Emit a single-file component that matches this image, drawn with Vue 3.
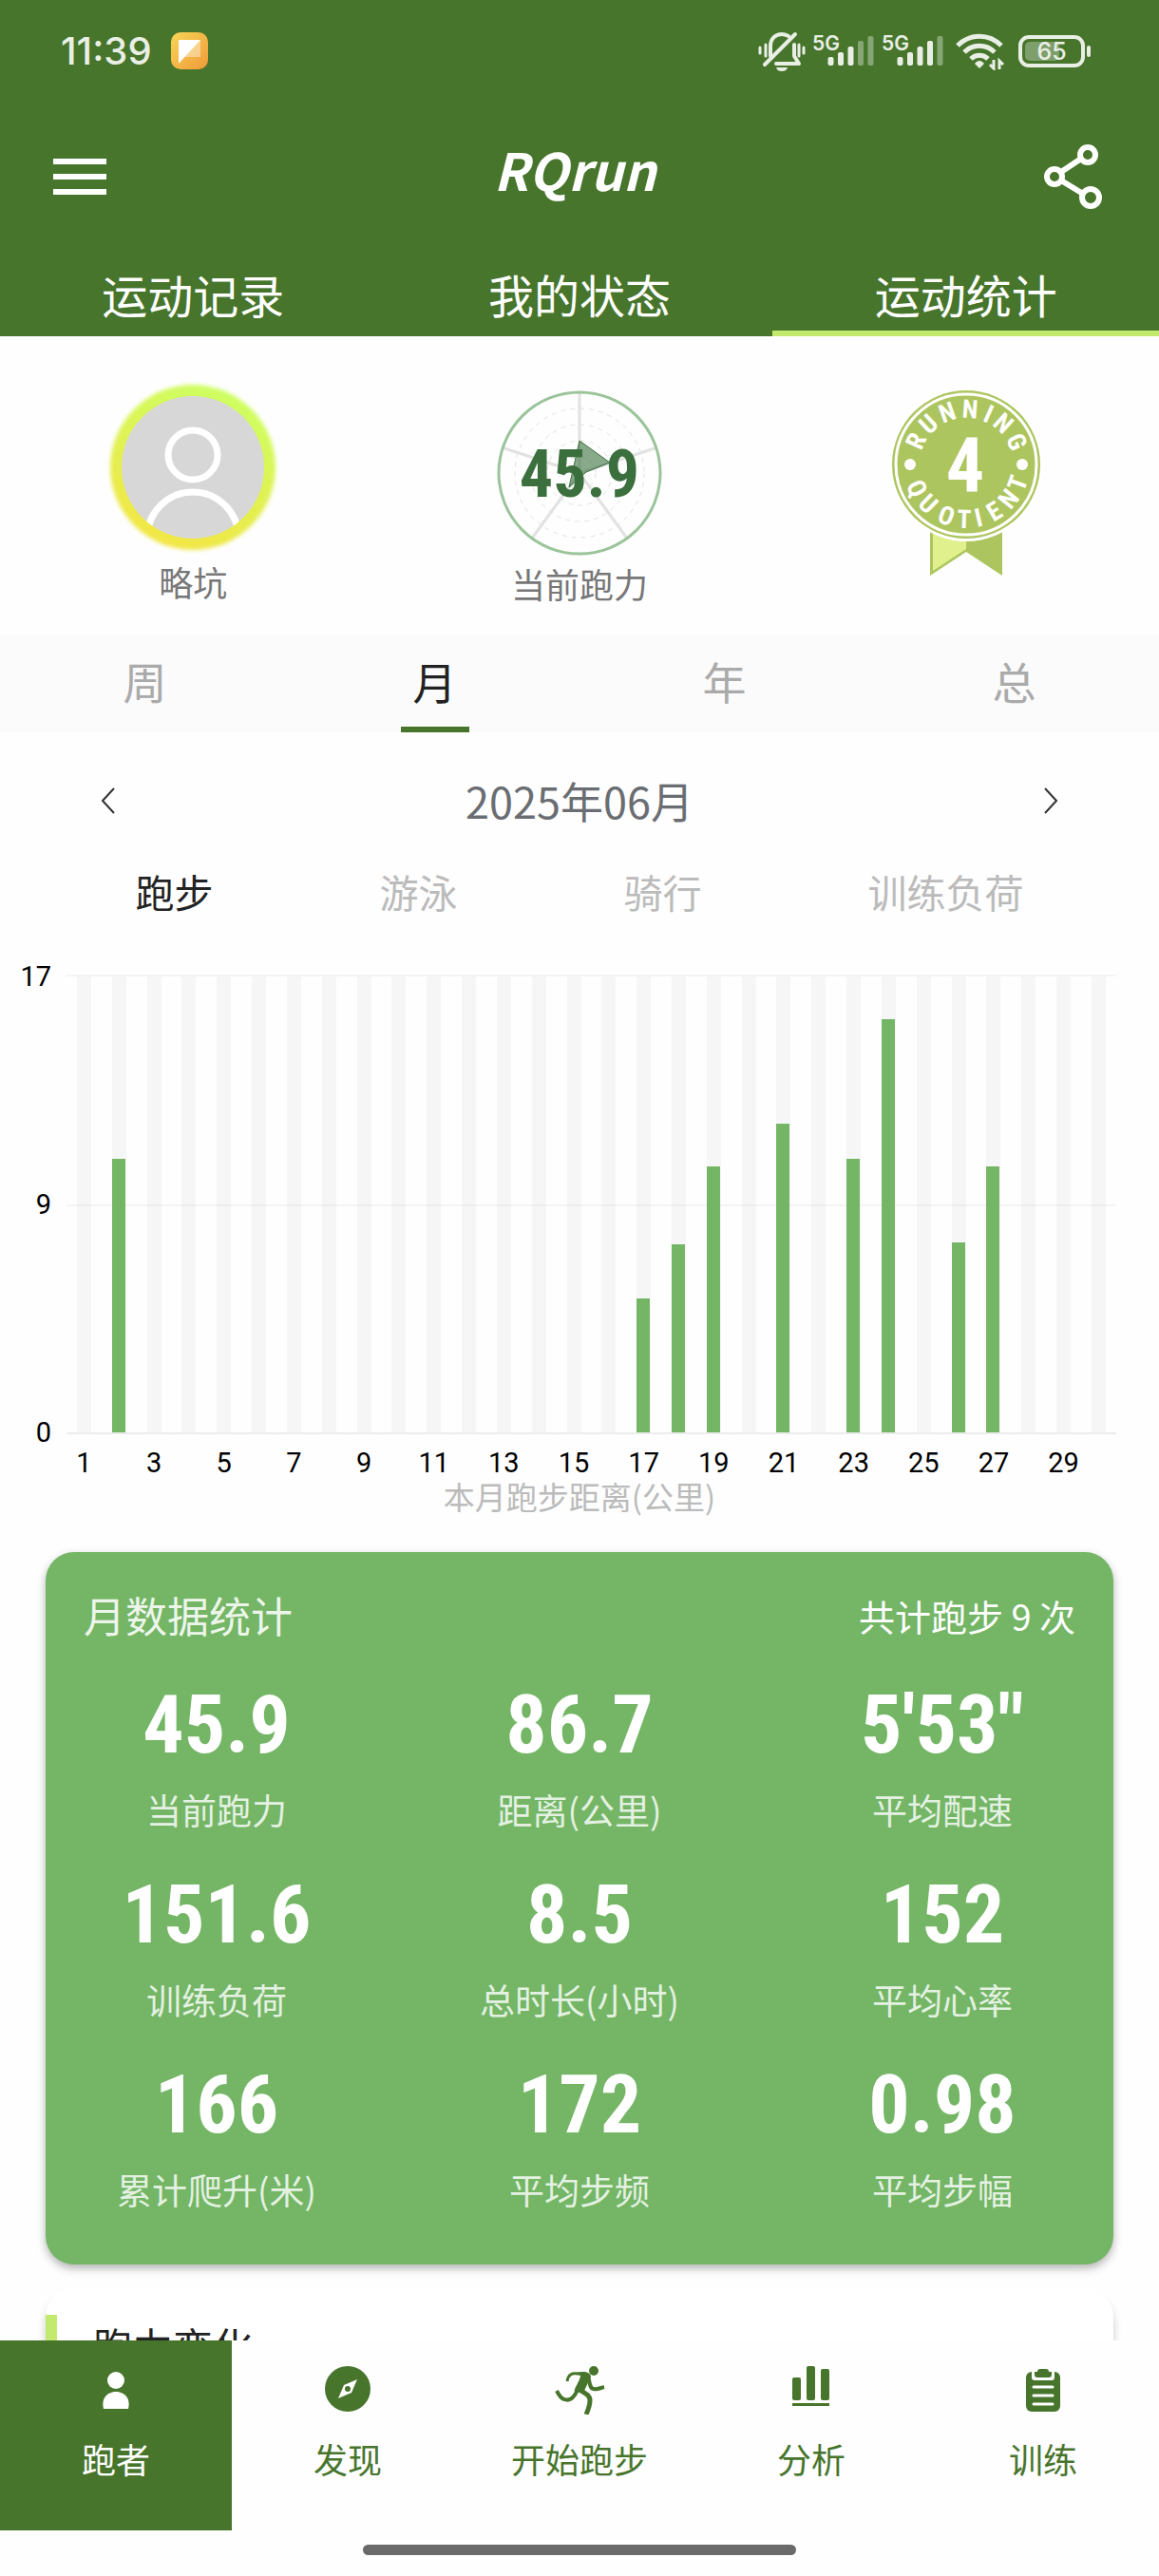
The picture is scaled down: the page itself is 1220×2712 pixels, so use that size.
<template>
  <div class="app">
    <header class="header">
      <div class="status-bar">
        <div class="status-left">
          <span class="clock">11:39</span>
          <svg width="40" height="40" viewBox="0 0 40 40">
            <defs>
              <linearGradient id="note" x1="0" y1="0" x2="1" y2="1">
                <stop offset="0" stop-color="#f8d656" />
                <stop offset="1" stop-color="#f09a3a" />
              </linearGradient>
            </defs>
            <rect width="39" height="39" rx="10" fill="url(#note)" />
            <rect x="8" y="8" width="23" height="18" fill="#fff" opacity=".4" />
            <path d="M8 8h23L8 33z" fill="#fff" />
          </svg>
        </div>
        <div class="status-right">
          <svg width="50" height="44" viewBox="0 0 50 44" fill="none" stroke="#e9efe5" stroke-width="4" stroke-linecap="round" stroke-linejoin="round">
            <path d="M13 27V16c0-7 5-12 12-12 3 0 5 1 7 2M38 15v12l5 8H19" />
            <path d="M39 4 7 36" />
            <path d="M8 15v12M2 18v6M43 15v12M48 18v6" stroke-width="3" />
            <path d="M19 39h12c-1 3-3 4-6 4s-5-1-6-4z" fill="#e9efe5" stroke="none" />
          </svg>
          <svg v-for="(level, i) in signals" :key="i" class="signal" width="66" height="44" viewBox="0 0 66 44">
            <text x="0" y="21" class="net">5G</text>
            <rect
              v-for="n in 5"
              :key="n"
              :x="6 + n * 10.5"
              :y="37 - bars[n - 1]"
              width="6"
              :height="bars[n - 1]"
              rx="2"
              fill="#e9efe5"
              :opacity="n > level ? 0.4 : 1"
            />
          </svg>
          <svg class="wifi" width="52" height="40" viewBox="0 0 52 40" fill="none" stroke="#e9efe5" stroke-width="5">
            <path d="M2 14C15 1 35 1 48 14" />
            <path d="M9 21c9-9 23-9 32 0" />
            <path d="M16 28c5-5 13-5 18 0" />
            <path d="M25 38l-5-5c3-4 7-4 10 0z" fill="#e9efe5" stroke="none" />
            <path d="M40 29v9l-4-4M46 39v-9l4 4" stroke-width="3" />
          </svg>
          <svg width="78" height="36" viewBox="0 0 78 36">
            <rect x="2" y="3" width="66" height="30" rx="9" fill="none" stroke="#e9efe5" stroke-width="4" />
            <rect x="7" y="8" width="36" height="20" rx="5" fill="#fff" opacity=".3" />
            <rect x="72" y="12" width="4" height="12" rx="2" fill="#e9efe5" />
            <text x="35" y="27" text-anchor="middle" class="battery">65</text>
          </svg>
        </div>
      </div>

      <div class="title-bar">
        <button class="icon-btn" aria-label="菜单">
          <svg width="56" height="38" viewBox="0 0 56 38" fill="#fff">
            <path d="M0 0h56v6H0zM0 16h56v6H0zM0 32h56v6H0z" />
          </svg>
        </button>
        <h1>RQrun</h1>
        <button class="icon-btn" aria-label="分享">
          <svg width="62" height="68" viewBox="0 0 62 68" fill="none" stroke="#fff" stroke-width="6">
            <circle cx="47" cy="11" r="8" />
            <circle cx="12" cy="34" r="8" />
            <circle cx="50" cy="56" r="9" />
            <path d="M19 29 40 15M19 38 42 52" />
          </svg>
        </button>
      </div>

      <nav class="main-tabs">
        <button v-for="tab in mainTabs" :key="tab" :class="{ active: tab === mainTab }" @click="mainTab = tab">{{ tab }}</button>
      </nav>
    </header>

    <main class="content">
      <section class="profile">
        <div class="profile-item">
          <svg width="184" height="190" viewBox="0 0 184 190">
            <defs>
              <linearGradient id="ring" x1="0.7" y1="0" x2="0.3" y2="1">
                <stop offset="0" stop-color="#ccff62" />
                <stop offset="1" stop-color="#f4e544" />
              </linearGradient>
              <clipPath id="face"><circle cx="92" cy="92" r="75" /></clipPath>
              <filter id="soft"><feGaussianBlur stdDeviation="2" /></filter>
            </defs>
            <circle cx="92" cy="92" r="87" fill="url(#ring)" filter="url(#soft)" />
            <circle cx="92" cy="92" r="75" fill="#d7d7d7" />
            <g clip-path="url(#face)" fill="none" stroke="#fff" stroke-width="7">
              <circle cx="92" cy="79" r="26" />
              <circle cx="92" cy="166" r="48" />
            </g>
          </svg>
          <span>略坑</span>
        </div>
        <div class="profile-item">
          <svg width="184" height="192" viewBox="0 0 184 192">
            <g fill="none" stroke="#e2e2e2">
              <circle v-for="r in [17, 34, 51, 68]" :key="r" cx="92" cy="98" :r="r" stroke-width="1" stroke-dasharray="5 5" />
              <path stroke-width="3" d="M92 98V12M92 98l82-27M92 98l51 70M92 98l-51 70M92 98 10 71" />
            </g>
            <circle cx="92" cy="98" r="85" fill="none" stroke="#9bc49a" stroke-width="3" />
            <text x="92" y="123" text-anchor="middle" class="power">45.9</text>
            <path d="M92 64l32 23-25 10-18 16z" fill="#3b6f3e" fill-opacity=".6" stroke="#3b6f3e" />
          </svg>
          <span>当前跑力</span>
        </div>
        <div class="profile-item">
          <svg width="184" height="210" viewBox="0 0 184 210">
            <path d="M54 150h38v31l-38 25z" fill="#adc55f" />
            <path d="M57 150h35v28l-35 23z" fill="#e0f08c" />
            <path d="M92 150h38v56l-38-25z" fill="#adc55f" />
            <circle cx="92" cy="89" r="81" fill="#fff" />
            <circle cx="92" cy="89" r="78" fill="#adc55f" />
            <circle cx="92" cy="89" r="74" fill="none" stroke="#fff" stroke-width="3" />
            <circle cx="33" cy="89" r="6" fill="#fff" />
            <circle cx="151" cy="89" r="6" fill="#fff" />
            <text
              v-for="(l, i) in badgeTop"
              :key="'t' + i"
              x="92"
              y="40"
              text-anchor="middle"
              class="badge-letter"
              :transform="`rotate(${l[1]} 92 89)`"
            >{{ l[0] }}</text>
            <text
              v-for="(l, i) in badgeBottom"
              :key="'b' + i"
              x="92"
              y="156"
              text-anchor="middle"
              class="badge-letter"
              :transform="`rotate(${l[1]} 92 89)`"
            >{{ l[0] }}</text>
            <text x="91" y="117" text-anchor="middle" class="badge-num">4</text>
          </svg>
        </div>
      </section>

      <nav class="period-tabs">
        <button v-for="p in periods" :key="p" :class="{ active: p === period }" @click="period = p">
          <span>{{ p }}</span>
        </button>
      </nav>

      <div class="month-row">
        <button class="icon-btn" aria-label="上个月">
          <svg width="14" height="28" viewBox="0 0 14 28" fill="none" stroke="#333" stroke-width="2"><path d="M13 1 1 14l12 13" /></svg>
        </button>
        <span>2025年06月</span>
        <button class="icon-btn" aria-label="下个月">
          <svg width="14" height="28" viewBox="0 0 14 28" fill="none" stroke="#333" stroke-width="2"><path d="M1 1l12 13L1 27" /></svg>
        </button>
      </div>

      <nav class="sport-tabs">
        <button v-for="s in sports" :key="s" :class="{ active: s === sport }" @click="sport = s">{{ s }}</button>
      </nav>

      <section class="chart">
        <div class="y-axis">
          <span>17</span>
          <span>9</span>
          <span>0</span>
        </div>
        <div class="chart-body">
          <div class="plot">
            <div v-for="d in days" :key="d.day" class="day">
              <div class="track">
                <div class="bar" :style="{ height: (d.km / maxKm) * 100 + '%' }"></div>
              </div>
            </div>
          </div>
          <div class="x-axis">
            <span v-for="d in days" :key="d.day">{{ d.day % 2 ? d.day : '' }}</span>
          </div>
        </div>
      </section>
      <p class="caption">本月跑步距离(公里)</p>

      <section class="stats-card">
        <div class="stats-head">
          <h2>月数据统计</h2>
          <span>共计跑步 9 次</span>
        </div>
        <div class="stats-grid">
          <div v-for="s in stats" :key="s.label" class="stat">
            <strong>{{ s.value }}</strong>
            <span>{{ s.label }}</span>
          </div>
        </div>
      </section>

      <section class="trend-card">
        <h2>跑力变化</h2>
      </section>
    </main>

    <nav class="bottom-nav">
      <button class="active">
        <svg width="54" height="54" viewBox="0 0 54 54" fill="#fff">
          <circle cx="27" cy="18" r="9" />
          <path d="M14 48c-6-24 32-24 26 0z" />
        </svg>
        <span>跑者</span>
      </button>
      <button>
        <svg width="54" height="54" viewBox="0 0 54 54">
          <circle cx="27" cy="27" r="24" fill="#47752c" />
          <path d="M37 17l-6 14-14 6 6-14z" fill="#fff" />
          <circle cx="27" cy="27" r="3" fill="#47752c" />
        </svg>
        <span>发现</span>
      </button>
      <button>
        <svg width="54" height="54" viewBox="0 0 54 54" fill="none" stroke="#47752c" stroke-width="4">
          <circle cx="42" cy="8" r="5" fill="#47752c" stroke="none" />
          <path d="M14 19c1-7 5-9 11-8l9 1" stroke-width="3" />
          <path d="M23 10c9-2 15-1 16 4l-8 17-9-1c-2-2 6-12 6-17z" fill="#47752c" stroke="none" />
          <path d="M36 13c2 9 2 14 6 14 4 1 7-1 11-2" />
          <path d="M25 28c-4 9-9 12-14 10-4-1-6-5-8-9" />
          <path d="M27 28c7 4 11 6 11 11 0 6-2 10-4 15" stroke-width="5" />
        </svg>
        <span>开始跑步</span>
      </button>
      <button>
        <svg width="54" height="54" viewBox="0 0 54 54" fill="#47752c">
          <rect x="7" y="15" width="9" height="24" rx="2" />
          <rect x="22" y="3" width="9" height="36" rx="2" />
          <rect x="37" y="6" width="9" height="33" rx="2" />
          <rect x="7" y="42" width="39" height="3" />
        </svg>
        <span>分析</span>
      </button>
      <button>
        <svg width="54" height="54" viewBox="0 0 54 54">
          <rect x="9" y="9" width="36" height="42" rx="6" fill="#47752c" />
          <path d="M15 8v7q0 3 3 3h18q3 0 3-3V8z" fill="#fff" />
          <path d="M18 9h3q0-3 3-3h6q3 0 3 3h3v3q0 3-3 3H21q-3 0-3-3z" fill="#47752c" />
          <path d="M17 25h20M17 34h20M17 43h20" stroke="#fff" stroke-width="3" stroke-linecap="round" />
        </svg>
        <span>训练</span>
      </button>
    </nav>
    <div class="home-bar"><i></i></div>
  </div>
</template>

<script setup>
import { ref } from "vue";

const mainTabs = ["运动记录", "我的状态", "运动统计"];
const mainTab = ref("运动统计");
const periods = ["周", "月", "年", "总"];
const period = ref("月");
const sports = ["跑步", "游泳", "骑行", "训练负荷"];
const sport = ref("跑步");

// status bar signal strength, one per SIM
const signals = [3, 4];
const bars = [9, 14, 20, 26, 31];

// letter + angle around the badge
const badgeTop = [["R", -65], ["U", -43], ["N", -20], ["N", 4], ["I", 24], ["N", 42], ["G", 66]];
const badgeBottom = [["Q", 64], ["U", 44], ["O", 21], ["T", 2], ["I", -13], ["E", -31], ["N", -51], ["T", -70]];

const maxKm = 17;
const runs = { 2: 10.2, 17: 5, 18: 7, 19: 9.9, 21: 11.5, 23: 10.2, 24: 15.4, 26: 7.1, 27: 9.9 };
const days = Array.from({ length: 30 }, (_, i) => ({ day: i + 1, km: runs[i + 1] || 0 }));

const stats = [
  { value: "45.9", label: "当前跑力" },
  { value: "86.7", label: "距离(公里)" },
  { value: "5'53\"", label: "平均配速" },
  { value: "151.6", label: "训练负荷" },
  { value: "8.5", label: "总时长(小时)" },
  { value: "152", label: "平均心率" },
  { value: "166", label: "累计爬升(米)" },
  { value: "172", label: "平均步频" },
  { value: "0.98", label: "平均步幅" },
];
</script>

<style>
body {
  margin: 0;
  background: #fefefe;
}
</style>

<style scoped>
.app {
  display: flex;
  flex-direction: column;
  height: 100vh;
  overflow: hidden;
  font-family: "Noto Sans CJK SC", sans-serif;
  color: #222;
}

button {
  padding: 0;
  border: 0;
  background: none;
  font: inherit;
  color: inherit;
}

svg {
  display: block;
}

h1,
h2,
p {
  margin: 0;
  font-weight: 400;
}

.header {
  flex: none;
  background: #47752c;
  color: #fff;
}

.status-bar {
  display: flex;
  justify-content: space-between;
  align-items: center;
  height: 108px;
  padding: 0 70px 0 64px;
}

.status-left,
.status-right {
  display: flex;
  align-items: center;
}

.status-left {
  gap: 20px;
}

.clock {
  font: 500 40px/48px Inter, sans-serif;
  color: #e9efe5;
}

.signal {
  margin-left: 7px;
}

.wifi {
  margin: 0 14px 0 12px;
}

.net {
  font: 600 21px Inter, sans-serif;
  fill: #e9efe5;
}

.battery {
  font: 500 25px Inter, sans-serif;
  fill: #e9efe5;
}

.title-bar {
  display: flex;
  justify-content: space-between;
  align-items: center;
  height: 156px;
  padding: 0 60px 0 56px;
}

.title-bar h1 {
  padding-bottom: 16px;
  font-size: 54px;
  font-weight: 700;
  font-style: italic;
  line-height: 80px;
}

.main-tabs {
  display: grid;
  grid-template-columns: repeat(3, 1fr);
}

.main-tabs button {
  padding-top: 8px;
  padding-bottom: 2px;
  border-bottom: 6px solid transparent;
  font-size: 48px;
  line-height: 74px;
}

.main-tabs .active {
  border-color: #c3e96f;
}

.content {
  flex: 1;
  min-height: 0;
  overflow: hidden;
}

.profile {
  display: grid;
  grid-template-columns: repeat(3, 1fr);
  height: 268px;
  padding-top: 46px;
}

.profile-item {
  display: flex;
  flex-direction: column;
  align-items: center;
  font-size: 36px;
  line-height: 44px;
  color: #777;
}

.power,
.badge-num,
.badge-letter,
.stat strong {
  font-family: "Roboto Condensed", "Liberation Sans Narrow", sans-serif;
  font-weight: 700;
}

.power {
  font-size: 70px;
  fill: #3b6f3e;
}

.badge-num {
  font-size: 80px;
  fill: #fff;
}

.badge-letter {
  font-size: 27px;
  fill: #fff;
}

.period-tabs {
  display: grid;
  grid-template-columns: repeat(4, 1fr);
  background: #fbfbfb;
  font-size: 46px;
  line-height: 93px;
  color: #aaa;
}

.period-tabs span {
  display: inline-block;
  min-width: 72px;
  padding-top: 2px;
  padding-bottom: 2px;
  border-bottom: 6px solid transparent;
}

.period-tabs .active span {
  border-color: #47752c;
  color: #222;
}

.month-row {
  display: flex;
  justify-content: space-between;
  align-items: center;
  padding: 42px 107px;
  font-size: 45px;
  line-height: 60px;
  color: #6a6d72;
}

.sport-tabs {
  display: flex;
  justify-content: space-around;
  padding: 0 55px;
  font-size: 41px;
  line-height: 46px;
  color: #bbb;
}

.sport-tabs .active {
  color: #222;
}

.chart {
  display: flex;
  gap: 16px;
  padding: 49px 45px 0 0;
  font: 29px Roboto, sans-serif;
  color: #000;
}

.y-axis {
  display: flex;
  flex-direction: column;
  justify-content: space-between;
  width: 54px;
  height: 516px;
  line-height: 36px;
  text-align: right;
}

.chart-body {
  flex: 1;
  min-width: 0;
}

.plot {
  position: relative;
  display: flex;
  height: 480px;
  margin: 18px 0 16px;
  box-shadow: 0 -2px #f4f4f4, 0 2px #ececec;
}

.plot::after {
  content: "";
  position: absolute;
  top: 50%;
  left: 0;
  right: 0;
  height: 2px;
  background: rgba(0, 0, 0, 0.04);
}

.day {
  display: flex;
  flex: 1;
  justify-content: center;
}

.track {
  display: flex;
  align-items: flex-end;
  width: 15px;
  background: #f6f6f6;
}

.bar {
  z-index: 1;
  width: 14px;
  background: #74b666;
}

.x-axis {
  display: flex;
  line-height: 32px;
}

.x-axis span {
  display: flex;
  flex: 1 1 0;
  justify-content: center;
  width: 0;
}

.caption {
  font-size: 33px;
  line-height: 38px;
  text-align: center;
  color: #bbb;
}

.stats-card,
.trend-card {
  margin: 40px 48px 0;
  border-radius: 30px;
}

.stats-card {
  padding: 36px 40px 54px;
  background: #74b666;
  box-shadow: 0 4px 10px rgba(0, 0, 0, 0.3);
  color: #fff;
}

.stats-head {
  display: flex;
  justify-content: space-between;
  align-items: center;
  font-size: 38px;
}

.stats-head h2 {
  font-size: 44px;
  line-height: 60px;
  color: rgba(255, 255, 255, 0.9);
}

.stats-grid {
  display: grid;
  grid-template-columns: repeat(3, 1fr);
  gap: 34px 102px;
  margin-top: 34px;
}

.stat {
  display: flex;
  flex-direction: column;
  align-items: center;
  gap: 12px;
  white-space: nowrap;
}

.stat strong {
  font-size: 86px;
  line-height: 104px;
}

.stat span {
  font-size: 37px;
  line-height: 50px;
  color: rgba(255, 255, 255, 0.82);
}

.trend-card {
  margin-top: 25px;
  padding: 28px 0;
  background: #fff;
  box-shadow: 0 8px 10px rgba(0, 0, 0, 0.2);
}

.trend-card h2 {
  padding-left: 38px;
  border-left: 12px solid #c3e96f;
  font-size: 42px;
  line-height: 64px;
}

.bottom-nav {
  display: grid;
  flex: none;
  grid-template-columns: repeat(5, 1fr);
  z-index: 1;
  background: #fefefe;
  color: #47752c;
}

.bottom-nav button {
  display: flex;
  flex-direction: column;
  align-items: center;
  gap: 20px;
  height: 200px;
  padding-top: 24px;
  font-size: 36px;
  line-height: 52px;
}

.bottom-nav .active {
  background: #47752c;
  color: #fff;
}

.home-bar {
  display: flex;
  flex: none;
  justify-content: center;
  height: 33px;
  padding-top: 15px;
  background: #fefefe;
}

.home-bar i {
  width: 456px;
  height: 11px;
  border-radius: 6px;
  background: #6a6a6a;
}
</style>
